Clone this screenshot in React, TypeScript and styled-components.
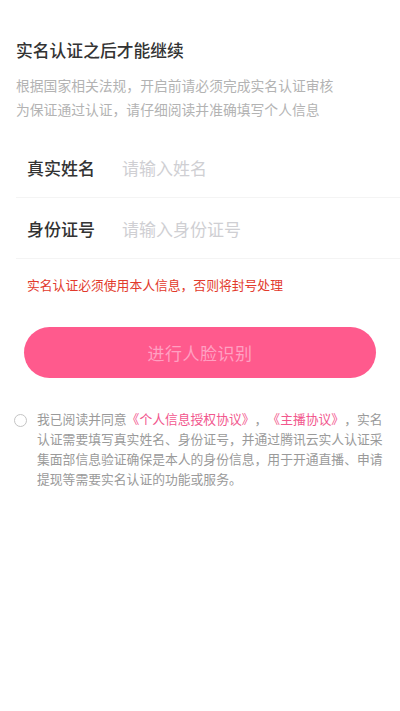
import React, { useState } from "react";
import styled, { createGlobalStyle } from "styled-components";

/**CSS *******************************************/
const GlobalStyle = createGlobalStyle`
    html, body {
        margin: 0;
        padding: 0;
        background: #fff;
        font-family: "Noto Sans CJK SC", "Noto Sans", sans-serif;
        text-spacing-trim: space-all;
        font-feature-settings: "chws" 0, "halt" 0;
    }
`;
const DivPage = styled.div`
    width: 400px;
    min-height: 711px;
    background: #fff;
    padding-top: 38px;
    box-sizing: border-box;
`;
const DivHeader = styled.div`
    padding: 0 16px;
`;
const H1Title = styled.h1`
    margin: 0;
    font-size: 16.8px;
    line-height: 24px;
    font-weight: 500;
    color: #333;
`;
const PSubtitle = styled.p`
    margin: 11px 0 0 0;
    font-size: 13.8px;
    line-height: 24px;
    color: #b3b3b3;
`;
const DivForm = styled.div`
    margin: 16px 0 0 16px;
`;
const DivRow = styled.div`
    display: flex;
    align-items: center;
    height: 60px;
    border-bottom: 1px solid #f4f4f4;
`;
const LabelField = styled.label`
    width: 95px;
    padding-left: 11px;
    font-size: 17px;
    font-weight: 500;
    color: #333;
`;
const InputField = styled.input`
    flex: 1;
    border: none;
    outline: none;
    font-family: inherit;
    font-size: 17px;
    color: #333;
    background: transparent;
    padding: 0;
    &::placeholder {
        color: #cfcfd3;
    }
`;
const PWarning = styled.p`
    margin: 16px 0 0 27px;
    font-size: 12.8px;
    line-height: 20px;
    color: #e23a2c;
`;
const ButtonFace = styled.button`
    display: block;
    margin: 32px 0 0 24px;
    width: 352px;
    height: 51px;
    border: none;
    border-radius: 26px;
    background: #ff5a8d;
    color: #ffa0c2;
    font-family: inherit;
    font-size: 17px;
    letter-spacing: 0.5px;
`;
const DivAgree = styled.div`
    display: flex;
    align-items: flex-start;
    margin: 31px 0 0 14px;
`;
const SpanRadio = styled.span<{ checked: boolean }>`
    flex: none;
    width: 11px;
    height: 11px;
    margin-top: 5px;
    margin-right: 10px;
    border-radius: 50%;
    border: 1px solid ${(p) => (p.checked ? "#ff5a8d" : "#c4c4c4")};
    background: ${(p) => (p.checked ? "#ff5a8d" : "#fff")};
`;
const PAgreeText = styled.p`
    margin: 0;
    width: 348px;
    font-size: 12.8px;
    line-height: 20px;
    color: #9a9a9a;
`;
const SpanLink = styled.span`
    color: #f2578e;
`;
/**CSS end****************************************/

const App = () => {
    const [agreed, setAgreed] = useState<boolean>(false);

    return (
        <DivPage>
            <GlobalStyle />
            <DivHeader>
                <H1Title>实名认证之后才能继续</H1Title>
                <PSubtitle>
                    根据国家相关法规，开启前请必须完成实名认证审核
                    <br />
                    为保证通过认证，请仔细阅读并准确填写个人信息
                </PSubtitle>
            </DivHeader>
            <DivForm>
                <DivRow>
                    <LabelField>真实姓名</LabelField>
                    <InputField placeholder="请输入姓名" />
                </DivRow>
                <DivRow>
                    <LabelField>身份证号</LabelField>
                    <InputField placeholder="请输入身份证号" />
                </DivRow>
            </DivForm>
            <PWarning>实名认证必须使用本人信息，否则将封号处理</PWarning>
            <ButtonFace>进行人脸识别</ButtonFace>
            <DivAgree onClick={() => setAgreed((prev) => !prev)}>
                <SpanRadio checked={agreed} />
                <PAgreeText>
                    我已阅读并同意<SpanLink>《个人信息授权协议》</SpanLink>，<SpanLink>《主播协议》</SpanLink>，实名认证需要填写真实姓名、身份证号，并通过腾讯云实人认证采集面部信息验证确保是本人的身份信息，用于开通直播、申请提现等需要实名认证的功能或服务。
                </PAgreeText>
            </DivAgree>
        </DivPage>
    );
};

export default App;
